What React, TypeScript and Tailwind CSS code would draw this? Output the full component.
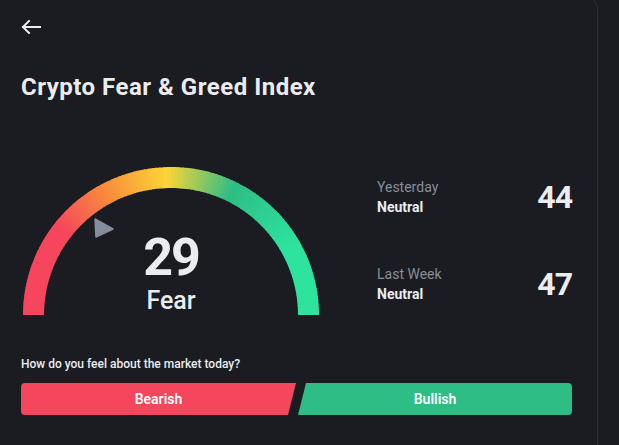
import React from 'react'

const stops: [number, string][] = [
  [0, '#f6465d'],
  [38, '#f6465d'],
  [62, '#f88b3c'],
  [88, '#fcd535'],
  [116, '#2ebd85'],
  [150, '#2de39d'],
  [180, '#2de39d'],
]

function hexToRgb(h: string) {
  const n = parseInt(h.slice(1), 16)
  return [(n >> 16) & 255, (n >> 8) & 255, n & 255]
}

function colorAt(deg: number) {
  for (let i = 0; i < stops.length - 1; i++) {
    const [a, ca] = stops[i]
    const [b, cb] = stops[i + 1]
    if (deg >= a && deg <= b) {
      const t = b === a ? 0 : (deg - a) / (b - a)
      const x = hexToRgb(ca)
      const y = hexToRgb(cb)
      const m = x.map((v, k) => Math.round(v + (y[k] - v) * t))
      return `rgb(${m[0]},${m[1]},${m[2]})`
    }
  }
  return stops[stops.length - 1][1]
}

function Gauge() {
  const cx = 148
  const cy = 149
  const r = 137.5
  const segs = 120
  const step = 180 / segs
  const pt = (deg: number) => {
    const a = (deg * Math.PI) / 180
    return [cx - r * Math.cos(a), cy - r * Math.sin(a)]
  }
  const paths = []
  for (let i = 0; i < segs; i++) {
    const a0 = i * step
    const a1 = Math.min(180, (i + 1) * step + 0.4)
    const [x0, y0] = pt(a0)
    const [x1, y1] = pt(a1)
    paths.push(
      <path
        key={i}
        d={`M${x0} ${y0} A${r} ${r} 0 0 1 ${x1} ${y1}`}
        stroke={colorAt(a0 + step / 2)}
        strokeWidth={21}
        fill="none"
      />
    )
  }
  return (
    <div className="relative w-[296px] h-[149px] shrink-0 ml-[2px]">
      <svg width="296" height="149" viewBox="0 0 296 149">
        {paths}
        <polygon
          points="72,53 73,71 90,63"
          fill="#848e9c"
          stroke="#848e9c"
          strokeWidth={1.5}
          strokeLinejoin="round"
        />
      </svg>
      <div className="absolute left-0 right-0 top-[66px] flex flex-col items-center">
        <div className="text-[52px] leading-none font-bold tracking-[-2px] text-[#eaecef]">29</div>
        <div className="mt-[4px] text-[25px] leading-none font-medium text-[#eaecef]">Fear</div>
      </div>
    </div>
  )
}

function HistoryRow({ label, value }: { label: string; value: string }) {
  return (
    <div className="flex items-center justify-between">
      <div>
        <div className="text-[14px] leading-[20px] text-[#848e9c]">{label}</div>
        <div className="text-[14px] leading-[20px] font-bold text-[#eaecef]">Neutral</div>
      </div>
      <div className="text-[32px] leading-none font-bold tracking-[-1px] text-[#eaecef]">{value}</div>
    </div>
  )
}

export default function App() {
  return (
    <div
      className="w-full h-[445px] overflow-hidden bg-[#1b1c21]"
      style={{ fontFamily: 'Roboto, "Noto Sans", sans-serif' }}
    >
      <div className="w-[598px] h-[460px] -mt-[6px] border-t border-r border-[#2b2f36] rounded-tr-[16px] bg-[#1b1c21] pl-[21px] pr-[25px] pt-[25px]">
        <svg width="20" height="14" viewBox="0 0 20 14" className="block">
          <path
            d="M19 7H2M8 1L2 7l6 6"
            stroke="#eaecef"
            strokeWidth={2}
            fill="none"
            strokeLinecap="square"
          />
        </svg>

        <h1 className="mt-[39px] text-[24px] leading-[28px] font-bold tracking-[0.5px] text-[#eaecef]">
          Crypto Fear &amp; Greed Index
        </h1>

        <div className="mt-[65px] flex items-start">
          <Gauge />
          <div className="ml-auto mt-[11px] w-[195px] flex flex-col gap-[47px]">
            <HistoryRow label="Yesterday" value="44" />
            <HistoryRow label="Last Week" value="47" />
          </div>
        </div>

        <p className="mt-[41px] text-[12px] leading-[16px] font-medium text-[#eaecef]">
          How do you feel about the market today?
        </p>

        <div className="mt-[11px] flex gap-[2px]">
          <button
            className="w-[275px] h-[32px] rounded-l-[4px] bg-[#f6465d] text-white text-[14px] font-semibold"
            style={{ clipPath: 'polygon(0 0, 100% 0, calc(100% - 8px) 100%, 0 100%)' }}
          >
            Bearish
          </button>
          <button
            className="flex-1 h-[32px] rounded-r-[4px] bg-[#2ebd85] text-white text-[14px] font-semibold"
            style={{ clipPath: 'polygon(8px 0, 100% 0, 100% 100%, 0 100%)' }}
          >
            Bullish
          </button>
        </div>
      </div>
    </div>
  )
}
